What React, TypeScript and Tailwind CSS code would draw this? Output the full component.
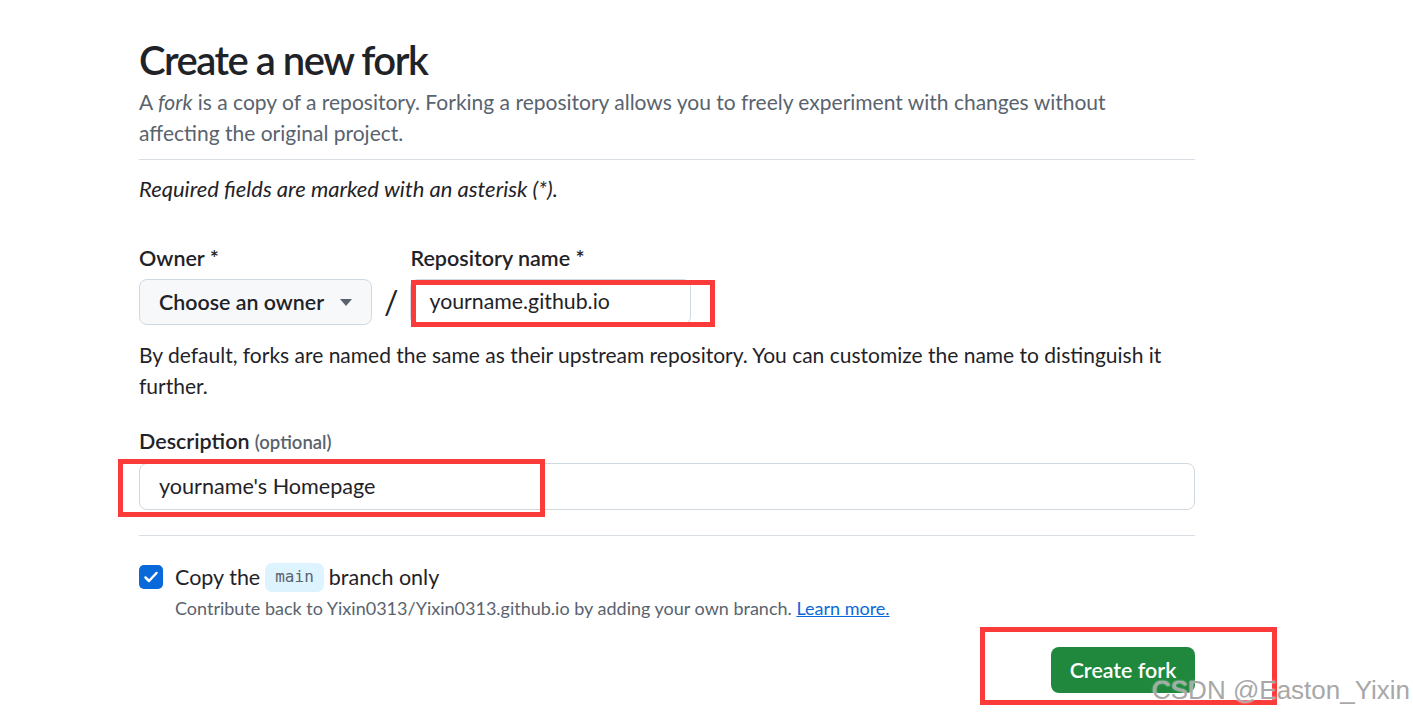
import React from "react";

const RedBox = ({ className }: { className: string }) => (
  <div className={"pointer-events-none absolute border-[5px] border-[#fb3a3a] " + className} />
);

export default function App() {
  return (
    <div className="relative min-h-[714px] w-full overflow-hidden bg-white text-[#1f2328] font-['Lato','Noto_Sans',sans-serif]">
      <div className="ml-[139px] w-[1056px] pt-[35px]">
        <h1 className="text-[40px] font-semibold leading-[50px] tracking-[-1.5px]">Create a new fork</h1>
        <p className="mt-px max-w-[990px] text-[21px] leading-[31px] text-[#59636e]">
          A <em>fork</em> is a copy of a repository. Forking a repository allows you to freely experiment with
          changes without affecting the original project.
        </p>
        <div className="mt-[11px] border-t border-[#d8dee4]" />

        <p className="mt-[14px] text-[22px] italic leading-[30px]">
          Required fields are marked with an asterisk (*).
        </p>

        <div className="mt-[42px] flex items-end">
          <div className="flex flex-col">
            <label className="text-[21.5px] font-semibold leading-[25px]">Owner *</label>
            <button className="mt-[8px] flex h-[46px] w-[233px] items-center justify-between rounded-[8px] border border-[#d1d9e0] bg-[#f6f8fa] pl-[19px] pr-[19px] text-[21.4px] font-semibold">
              <span>Choose an owner</span>
              <svg width="12" height="7" viewBox="0 0 12 7">
                <path d="M0 0h12L6 7z" fill="#59636e" />
              </svg>
            </button>
          </div>
          <span className="mx-[12px] mb-[5px] text-[32px] leading-[36px]">/</span>
          <div className="flex flex-col">
            <label className="text-[21.5px] font-semibold leading-[25px]">Repository name *</label>
            <div className="mt-[8px] flex h-[46px] w-[281px] items-center rounded-[8px] border border-[#d1d9e0] bg-white pl-[18px] text-[21.3px]">
              yourname.github.io
            </div>
          </div>
        </div>

        <p className="mt-[14px] text-[21px] leading-[31px]">
          By default, forks are named the same as their upstream repository. You can customize the name to
          distinguish it further.
        </p>

        <label className="mt-[28px] block text-[21.5px] font-semibold leading-[25px]">
          Description <span className="text-[18.5px] text-[#59636e]">(optional)</span>
        </label>
        <div className="mt-[8px] flex h-[47px] items-center rounded-[8px] border border-[#d1d9e0] pl-[19px] text-[21.6px]">
          yourname's Homepage
        </div>

        <div className="mt-[25px] border-t border-[#d8dee4]" />

        <div className="mt-[26px] flex h-[30px] items-center">
          <div className="flex h-[24px] w-[24px] items-center justify-center rounded-[5px] bg-[#0969da]">
            <svg width="16" height="16" viewBox="0 0 16 16">
              <path d="M2.5 8.5l3.5 3.5 7.5-8" fill="none" stroke="white" strokeWidth="2.5" strokeLinecap="round" strokeLinejoin="round" />
            </svg>
          </div>
          <span className="ml-[12px] text-[21.5px]">Copy the</span>
          <code className="mx-[5px] flex h-[29px] items-center rounded-[7px] bg-[#ddf4ff] px-[10px] font-['DejaVu_Sans_Mono',monospace] text-[16px] text-[#59636e]">
            main
          </code>
          <span className="text-[21.5px]">branch only</span>
        </div>
        <p className="mt-[4px] ml-[36px] text-[18px] leading-[24px] text-[#59636e]">
          Contribute back to Yixin0313/Yixin0313.github.io by adding your own branch.{" "}
          <a className="text-[#0969da] underline">Learn more.</a>
        </p>

        <div className="mt-[27px] flex justify-end">
          <button className="h-[46px] w-[144px] rounded-[8px] bg-[#1f883d] text-[21.4px] font-semibold text-white">
            Create fork
          </button>
        </div>
      </div>

      <RedBox className="left-[411px] top-[280px] h-[47px] w-[304px]" />
      <RedBox className="left-[118px] top-[459px] h-[58px] w-[427px]" />
      <RedBox className="left-[980px] top-[627px] h-[78px] w-[297px]" />

      <div
        className="pointer-events-none absolute left-[1152px] top-[675px] whitespace-nowrap text-[26px] leading-[30px] text-[#a8a8a8] font-['Liberation_Sans',sans-serif]"
        style={{ textShadow: "0 0 2px #fff" }}
      >
        CSDN @Easton_Yixin
      </div>
    </div>
  );
}
